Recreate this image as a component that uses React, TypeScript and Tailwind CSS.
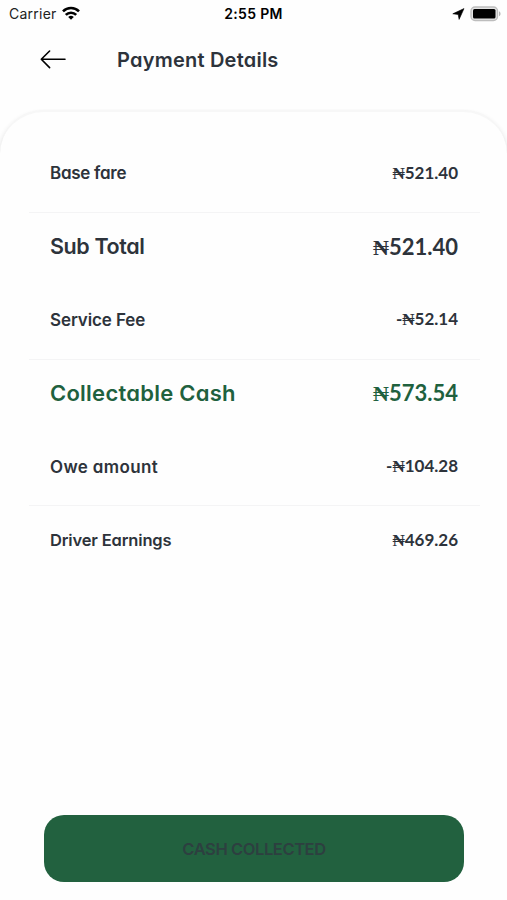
import type { ReactNode } from "react";

type RowProps = {
    label: string;
    amount: string;
    negative?: boolean;
    className: string;
    labelClass?: string;
};

const small = "h-[73.3px] text-[17px] text-[#2d333b]";
const large = "mb-[3.3px] h-[66.5px] text-[22px] text-[#2d333b]";
const green = "mb-[3.3px] h-[66.5px] text-[22px] text-[#1f613e]";

const Row = ({ label, amount, negative, className, labelClass }: RowProps) => (
    <div className={`flex items-center justify-between pr-[22px] pl-[21px] font-semibold ${className}`}>
        <span className={labelClass}>{label}</span>
        <span className="flex items-baseline font-['Lato',sans-serif] font-bold">
            {negative && <span>-</span>}
            <span className="font-['Liberation_Serif',serif]">₦</span>
            <span>{amount}</span>
        </span>
    </div>
);

const Section = ({ children }: { children: ReactNode }) => (
    <div className="border-b border-[#f4f4f5] pb-[2.5px]">{children}</div>
);

const StatusBar = () => (
    <div className="grid h-[28px] grid-cols-3 items-center font-['Inter',sans-serif] text-black">
        <div className="flex items-center gap-[5px] pl-[9px]">
            <span className="-mt-[2px] text-[14px] tracking-[0.25px] text-[#222]">Carrier</span>
            <svg className="-mt-[2px]" width="18" height="14" viewBox="0 0 18 14" fill="none" stroke="#000" strokeWidth="2.6">
                <path d="M1 5.3a11.3 11.3 0 0 1 16 0" />
                <path d="M3.8 8.9a7.3 7.3 0 0 1 10.4 0" />
                <path d="M9 13.8 6.2 11a4 4 0 0 1 5.6 0Z" fill="#000" stroke="none" />
            </svg>
        </div>
        <span className="text-center text-[14px] leading-[26px] font-semibold tracking-[0.3px]">2:55 PM</span>
        <div className="flex items-center justify-end gap-[5px] pr-[6px]">
            <svg className="-mt-[1px]" width="13" height="12" viewBox="0 0 13 12">
                <path d="M12 .6.8 5.8l5.4.7.9 4.9z" fill="#000" stroke="#000" strokeWidth=".6" strokeLinejoin="round" />
            </svg>
            <svg className="-mt-[1px]" width="31" height="16" viewBox="0 0 31 16">
                <rect x="1" y="1" width="26.5" height="13.5" rx="4" fill="#e4e4e4" stroke="#bdbdbd" strokeWidth="1.4" />
                <rect x="3" y="3" width="22.5" height="9.5" rx="1.5" fill="#000" />
                <path d="M29 5.2c2 .8 2 4.2 0 5z" fill="#b5b5b5" />
            </svg>
        </div>
    </div>
);

export default function App() {
    return (
        <div className="flex h-[900px] w-[507px] flex-col overflow-hidden bg-[#fefefe] font-['Inter',sans-serif]">
            <StatusBar />
            <header className="flex h-[82px] items-start pl-[40px] pt-[16px]">
                <svg className="mt-[5px]" width="26" height="20" viewBox="0 0 26 20" fill="none" stroke="#000" strokeWidth="1.6" strokeLinecap="round" strokeLinejoin="round">
                    <path d="M25 10.3H1.5M9.6 2 1.3 10.3l8.3 8.3" />
                </svg>
                <h1 className="ml-[51px] pt-px text-[20px] leading-[30px] font-semibold tracking-[0.22px] text-[#2d333b] [font-feature-settings:'cv11']">
                    Payment Details
                </h1>
            </header>
            <main className="flex flex-1 flex-col rounded-t-[44px] border-t-2 border-[#f7f7f7] bg-[#fefefe] pt-[24.5px] pr-[27px] pl-[29px] shadow-[2px_2px_4px_rgba(0,0,0,0.07),-2px_2px_4px_rgba(0,0,0,0.07)] [font-feature-settings:'cv11']">
                <Section>
                    <Row label="Base fare" amount="521.40" className={small} labelClass="pt-[2px] tracking-[-0.28px]" />
                </Section>
                <Row label="Sub Total" amount="521.40" className={large} labelClass="text-[21.5px] tracking-[-0.4px]" />
                <Section>
                    <Row label="Service Fee" amount="52.14" negative className={small} labelClass="pt-[2px] tracking-[-0.1px]" />
                </Section>
                <Row label="Collectable Cash" amount="573.54" className={green} labelClass="tracking-[0.25px]" />
                <Section>
                    <Row label="Owe amount" amount="104.28" negative className={small} labelClass="pt-[2px] tracking-[0.36px]" />
                </Section>
                <Row label="Driver Earnings" amount="469.26" className="h-[67px] text-[17px] text-[#2d333b]" labelClass="text-[16.5px] tracking-[-0.15px]" />
                <button className="mr-[16px] mb-[18.5px] ml-[15px] mt-auto h-[67px] rounded-[20px] bg-[#22613f] pt-[3px] text-[16.5px] font-semibold tracking-[-0.42px] text-[#2d3f40]">
                    CASH COLLECTED
                </button>
            </main>
        </div>
    );
}
